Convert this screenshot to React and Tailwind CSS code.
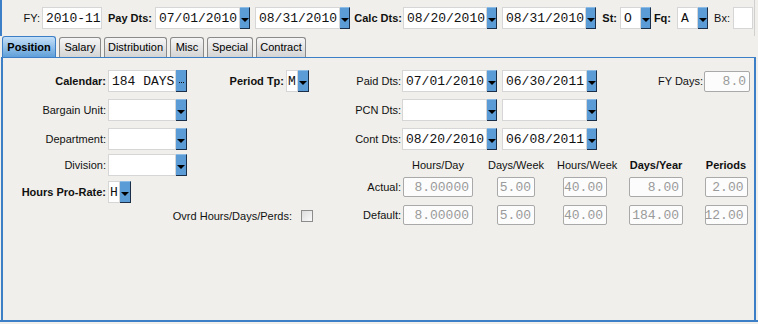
const sans = "font-['Liberation_Sans',Arial,sans-serif]";
const mono = "font-['Liberation_Mono','Courier_New',monospace]";

function Label({ w, bold, children, className = '' }) {
  return (
    <div
      className={`shrink-0 text-right text-[11px] text-[#111] whitespace-nowrap ${bold ? 'font-bold' : ''} ${className}`}
      style={{ width: w }}
    >
      {children}
    </div>
  );
}

function Field({ w, h = 22, value = '', className = '' }) {
  return (
    <div
      className={`shrink-0 bg-white border border-[#d6d6d6] pl-[3px] text-[13px] leading-none text-[#111] flex items-center overflow-hidden whitespace-nowrap ${mono} ${className}`}
      style={{ width: w, height: h }}
    >
      {value}
    </div>
  );
}

function Dim({ w, value, h = 20 }) {
  return (
    <div
      className={`shrink-0 bg-[#fcfcfc] border border-[#a9a9a9] rounded-[2px] pr-[3px] text-[13px] leading-none text-[#9a9a9a] flex items-center justify-end whitespace-nowrap ${mono}`}
      style={{ width: w, height: h }}
    >
      {value}
    </div>
  );
}

function DropBtn({ w = 10, h = 22 }) {
  return (
    <div
      className="shrink-0 bg-[#5b9bd6] border-r border-b border-[#1c2f48] border-t border-t-[#8cbbe6] flex items-center justify-center pt-[3px]"
      style={{ width: w, height: h }}
    >
      <div className="w-0 h-0 border-l-[4px] border-r-[4px] border-t-[4px] border-l-transparent border-r-transparent border-t-black" />
    </div>
  );
}

function DotBtn() {
  return (
    <div className="shrink-0 w-[11px] h-[22px] bg-[#5b9bd6] border-r border-b border-[#1c2f48] flex items-center justify-center gap-[1px] pt-[4px]">
      <span className="w-[1px] h-[1px] bg-[#111]" />
      <span className="w-[1px] h-[1px] bg-[#111]" />
      <span className="w-[1px] h-[1px] bg-[#111]" />
    </div>
  );
}

function DatePair({ a, b, w1 = 85, w2 = 85 }) {
  return (
    <>
      <Field w={w1} value={a} />
      <DropBtn />
      <Field w={w2} value={b} className="ml-[5px]" />
      <DropBtn />
    </>
  );
}

function Tab({ w, active, children }) {
  if (active) {
    return (
      <div
        className="h-[21px] rounded-t-[3px] border border-b-0 border-[#3d7fc6] bg-gradient-to-b from-[#c4e0f8] to-[#5f9fd8] flex items-center justify-center text-[11px] font-bold text-black"
        style={{ width: w }}
      >
        {children}
      </div>
    );
  }
  return (
    <div
      className="h-[20px] rounded-t-[3px] border border-b-0 border-[#8a8a8a] bg-gradient-to-b from-[#f6f6f6] to-[#d4d4d4] flex items-center justify-center text-[11px] text-black"
      style={{ width: w }}
    >
      {children}
    </div>
  );
}

const cols = [
  { w: 74, head: 'Hours/Day', field: 70 },
  { w: 82, head: 'Days/Week', field: 38 },
  { w: 56, head: 'Hours/Week', field: 44 },
  { w: 86, head: 'Days/Year', field: 54, bold: true },
  { w: 54, head: 'Periods', field: 43, bold: true },
];

const actual = ['8.00000', '5.00', '40.00', '8.00', '2.00'];
const defaults = ['8.00000', '5.00', '40.00', '184.00', '12.00'];

export default function App() {
  return (
    <div className={`w-[758px] h-[324px] overflow-hidden bg-[#f0efeb] ${sans}`}>
      {/* top filter bar */}
      <div className="w-[755px] h-[36px] flex items-center border-l-2 border-[#3d7fc6] border-r border-r-[#d0d0d0]">
        <Label w={38}>FY:</Label>
        <Field w={60} value="2010-11" className="ml-[2px]" />
        <Label w={50} bold>Pay Dts:</Label>
        <div className="flex ml-[3px]">
          <DatePair a="07/01/2010" b="08/31/2010" />
        </div>
        <Label w={52} bold>Calc Dts:</Label>
        <div className="flex ml-[1px]">
          <DatePair a="08/20/2010" b="08/31/2010" w1={84} w2={84} />
        </div>
        <Label w={21} bold>St:</Label>
        <Field w={21} value="O" className="ml-[3px]" />
        <DropBtn />
        <Label w={20} bold>Fq:</Label>
        <Field w={21} value="A" className="ml-[6px]" />
        <DropBtn />
        <Label w={22}>Bx:</Label>
        <Field w={20} className="ml-[3px]" />
      </div>

      {/* tabs */}
      <div className="h-[21px] flex items-end gap-[3px] pl-[2px]">
        <Tab w={54} active>Position</Tab>
        <Tab w={42}>Salary</Tab>
        <Tab w={63}>Distribution</Tab>
        <Tab w={34}>Misc</Tab>
        <Tab w={46}>Special</Tab>
        <Tab w={50}>Contract</Tab>
      </div>

      {/* panel */}
      <div className="ml-[1px] w-[755px] h-[263px] border-t border-l-2 border-r-2 border-[#3d7fc6] pt-[12px] flex">
        <div className="w-[327px] shrink-0 flex flex-col">
          <div className="h-[22px] flex items-center">
            <Label w={103} bold>Calendar:</Label>
            <Field w={68} value="184 DAYS" className="ml-[2px]" />
            <DotBtn />
            <Label w={97} bold>Period Tp:</Label>
            <Field w={12} value="M" className="ml-[2px] !pl-[1px]" />
            <DropBtn w={11} />
          </div>
          <div className="h-[22px] mt-[7px] flex items-center">
            <Label w={103}>Bargain Unit:</Label>
            <Field w={68} className="ml-[2px]" />
            <DropBtn w={11} />
          </div>
          <div className="h-[22px] mt-[7px] flex items-center">
            <Label w={103}>Department:</Label>
            <Field w={68} className="ml-[2px]" />
            <DropBtn w={11} />
          </div>
          <div className="h-[22px] mt-[4px] flex items-center">
            <Label w={103}>Division:</Label>
            <Field w={68} className="ml-[2px]" />
            <DropBtn w={11} />
          </div>
          <div className="h-[22px] mt-[5px] flex items-center">
            <Label w={103} bold>Hours Pro-Rate:</Label>
            <Field w={12} value="H" className="ml-[2px] !pl-[1px]" />
            <DropBtn w={11} />
          </div>
          <div className="h-[22px] mt-[2px] flex items-center">
            <Label w={289}>Ovrd Hours/Days/Perds:</Label>
            <div className="ml-[9px] w-[12px] h-[12px] border border-[#8c8c8c] bg-gradient-to-br from-[#dcdcdc] to-[#fafafa]" />
          </div>
        </div>

        <div className="flex-1 flex flex-col">
          <div className="h-[22px] flex items-center">
            <Label w={71}>Paid Dts:</Label>
            <div className="flex ml-[1px]">
              <DatePair a="07/01/2010" b="06/30/2011" />
            </div>
            <Label w={106}>FY Days:</Label>
            <div className="ml-[1px]">
              <Dim w={46} h={21} value="8.0" />
            </div>
          </div>
          <div className="h-[22px] mt-[7px] flex items-center">
            <Label w={71}>PCN Dts:</Label>
            <div className="flex ml-[1px]">
              <DatePair a="" b="" />
            </div>
          </div>
          <div className="h-[22px] mt-[7px] flex items-center">
            <Label w={71}>Cont Dts:</Label>
            <div className="flex ml-[1px]">
              <DatePair a="08/20/2010" b="06/08/2011" />
            </div>
          </div>

          <div className="h-[14px] mt-[8px] flex items-center">
            <div className="w-[71px] shrink-0" />
            {cols.map((c) => (
              <div
                key={c.head}
                className={`shrink-0 text-center text-[11px] text-[#111] whitespace-nowrap ${c.bold ? 'font-bold' : ''}`}
                style={{ width: c.w }}
              >
                {c.head}
              </div>
            ))}
          </div>

          {[['Actual:', actual, 5], ['Default:', defaults, 8]].map(([label, vals, mt]) => (
            <div key={label} className="h-[20px] flex items-center" style={{ marginTop: mt }}>
              <Label w={71}>{label}</Label>
              {cols.map((c, i) => (
                <div key={c.head} className="shrink-0 flex justify-center" style={{ width: c.w }}>
                  <Dim w={c.field} value={vals[i]} />
                </div>
              ))}
            </div>
          ))}
        </div>
      </div>
      <div className="h-[2px] w-full bg-[#3d7fc6]" />
    </div>
  );
}
